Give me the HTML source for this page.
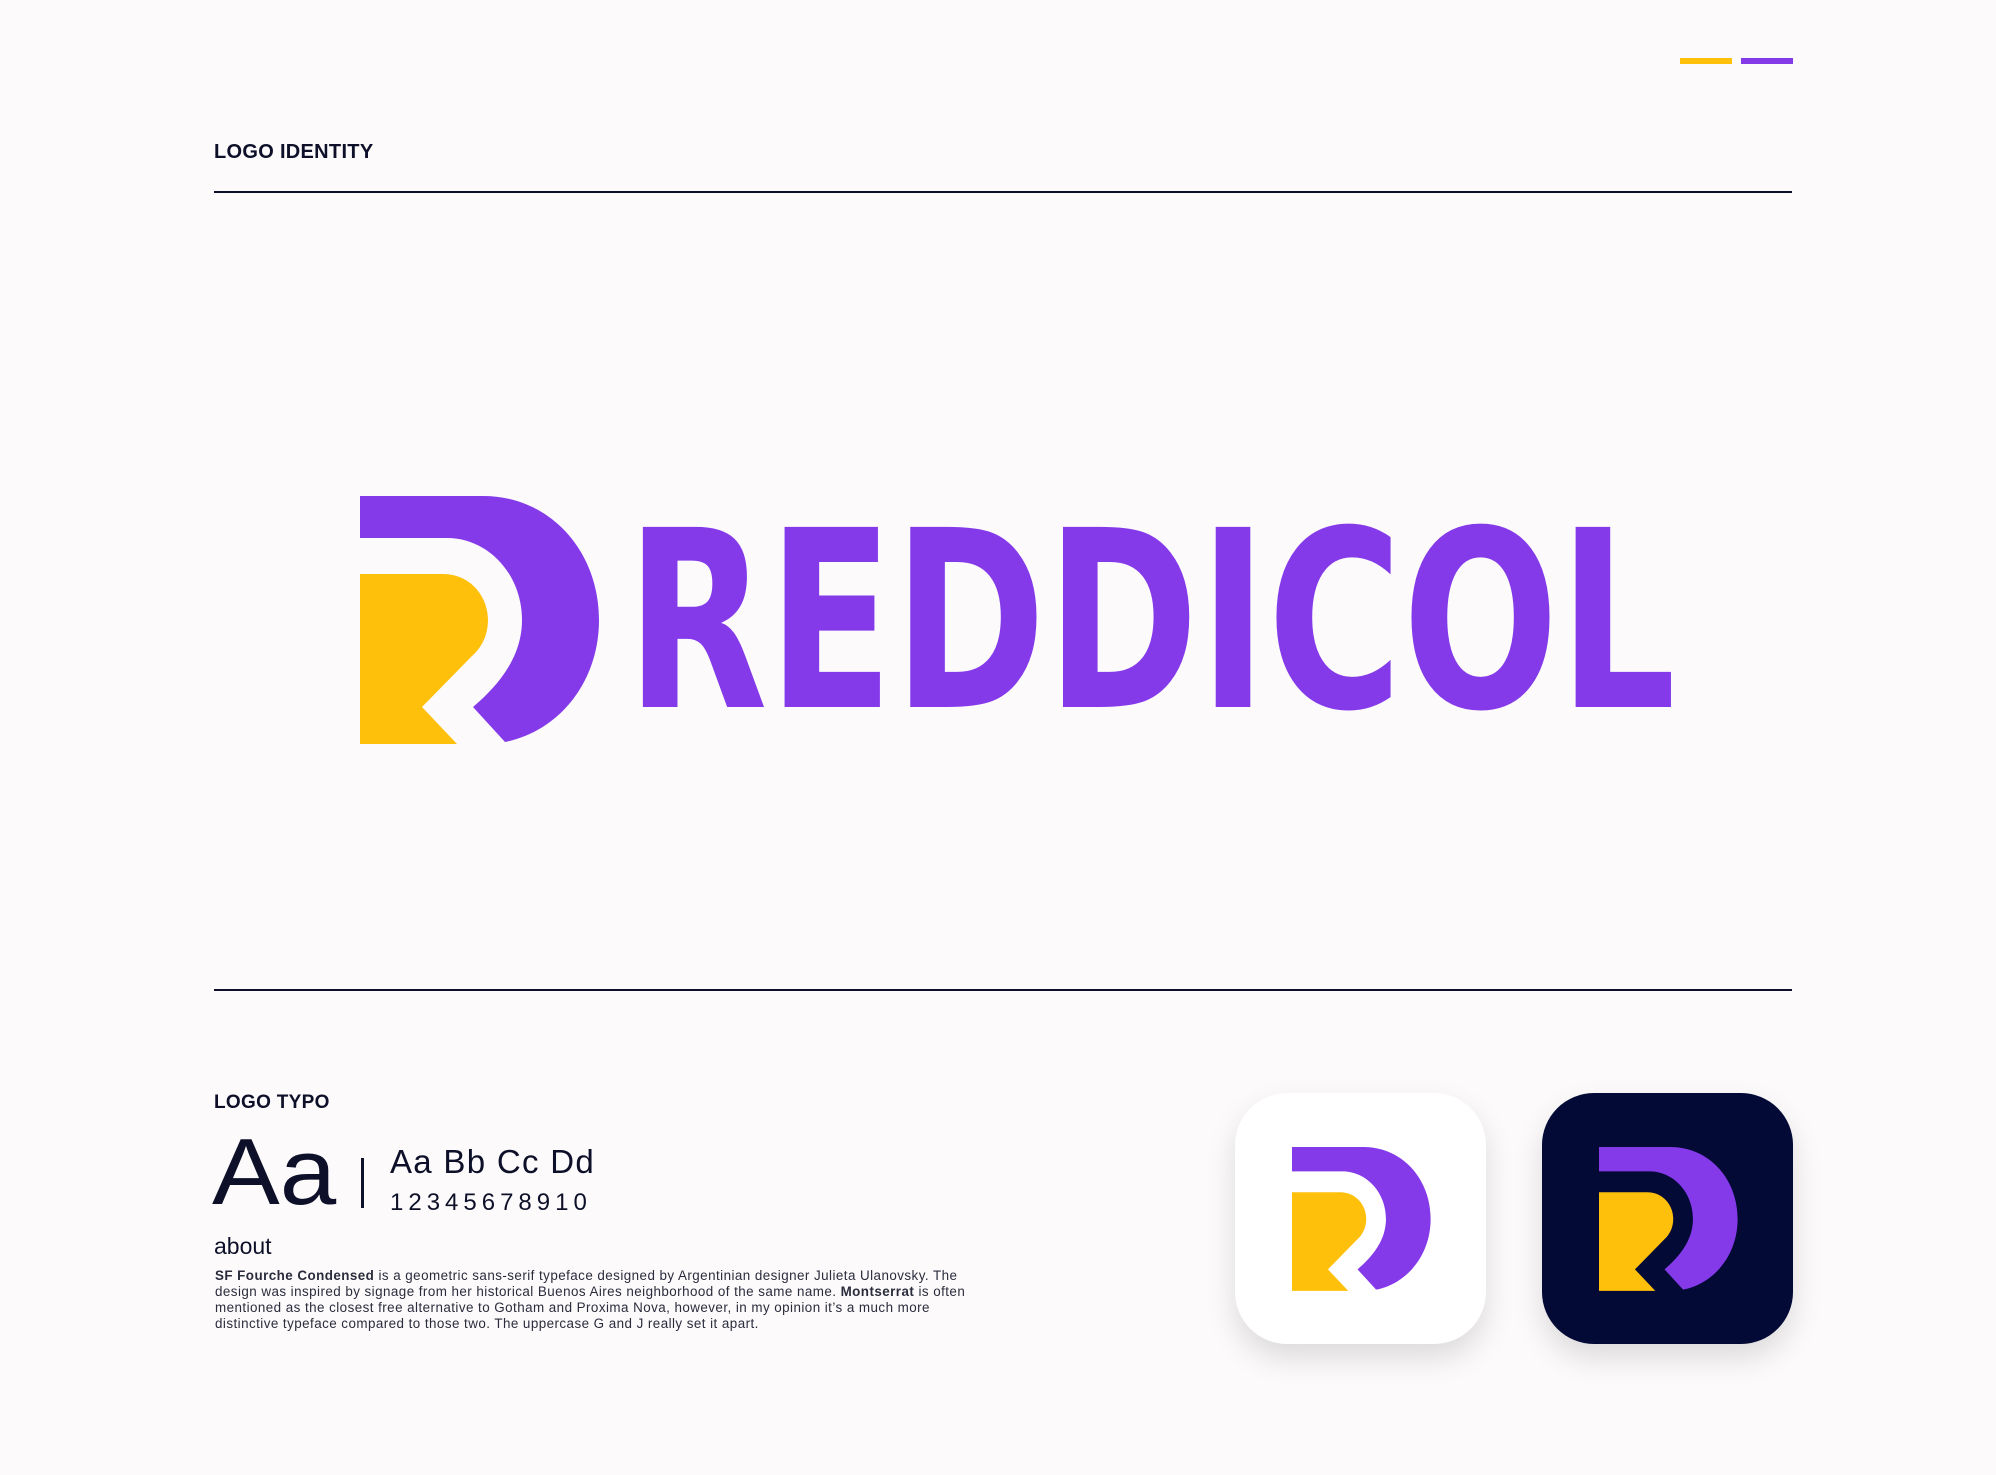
<!DOCTYPE html>
<html><head><meta charset="utf-8">
<style>
html,body{margin:0;padding:0}
body{width:1996px;height:1475px;background:#fcfafb;position:relative;overflow:hidden;font-family:"Liberation Sans",sans-serif;color:#0d1028}
.abs{position:absolute}
.line{position:absolute;left:214px;width:1578px;height:2px;background:#0d1028}
.box{position:absolute;top:1093px;width:251px;height:251px;border-radius:52px;box-shadow:0 14px 30px rgba(0,0,0,0.13)}
p{margin:0}
</style></head><body>
<div class="abs" style="left:1680px;top:58px;width:52px;height:6px;background:#ffc00b"></div>
<div class="abs" style="left:1741px;top:58px;width:52px;height:6px;background:#853aea"></div>
<div class="abs" style="left:214px;top:141px;font-size:20px;font-weight:bold;letter-spacing:0.3px">LOGO IDENTITY</div>
<div class="line" style="top:191px"></div>
<div class="line" style="top:989px"></div>

<svg class="abs" style="left:0;top:0" width="1996" height="1000" viewBox="0 0 1996 1000">
<defs>
<g id="mk">
<path fill="#853aea" d="M0 0 H123 C190 0 239 55 239 124 C239 185 200 235 145 246 L113 211 C140 188 162 160 162 124 C162 78 128 42 87 42 H0 Z"/>
<path fill="#ffc00b" d="M0 78 H83 C110 78 128 100 128 124 C128 140 121 152 112 160 L62 211 L97 248 H0 Z"/>
</g>
</defs>
<use href="#mk" x="360" y="496"/>
<text x="626" y="707" font-family="DejaVu Sans" font-weight="bold" font-size="247" fill="#853aea" textLength="1050" lengthAdjust="spacingAndGlyphs">REDDICOL</text>
</svg>

<div class="abs" style="left:214px;top:1092px;font-size:19px;font-weight:bold;letter-spacing:0.3px">LOGO TYPO</div>
<div class="abs" style="left:212px;top:1122px;font-size:94px;line-height:100px;transform:scaleX(1.08);transform-origin:left">Aa</div>
<div class="abs" style="left:361px;top:1158px;width:3px;height:50px;background:#0d1028"></div>
<div class="abs" style="left:390px;top:1142px;font-size:33px;line-height:40px;letter-spacing:1.3px">Aa Bb Cc Dd</div>
<div class="abs" style="left:390px;top:1188px;font-size:24px;line-height:30px;letter-spacing:5px">12345678910</div>
<div class="abs" style="left:214px;top:1232px;font-size:23px;line-height:28px">about</div>
<div class="abs" style="left:215px;top:1268px;width:770px;font-size:13.4px;line-height:16px;color:#2a2c3c;letter-spacing:0.45px">
<p><b>SF Fourche Condensed</b> is a geometric sans-serif typeface designed by Argentinian designer Julieta Ulanovsky. The design was inspired by signage from her historical Buenos Aires neighborhood of the same name. <b>Montserrat</b> is often mentioned as the closest free alternative to Gotham and Proxima Nova, however, in my opinion it’s a much more distinctive typeface compared to those two. The uppercase G and J really set it apart.</p>
</div>

<div class="box" style="left:1235px;background:#fff"></div>
<div class="box" style="left:1542px;background:#020a35"></div>
<svg class="abs" style="left:0;top:0" width="1996" height="1475" viewBox="0 0 1996 1475">
<use href="#mk" transform="translate(1292 1147) scale(0.58)"/>
<use href="#mk" transform="translate(1599 1147) scale(0.58)"/>
</svg>
</body></html>
